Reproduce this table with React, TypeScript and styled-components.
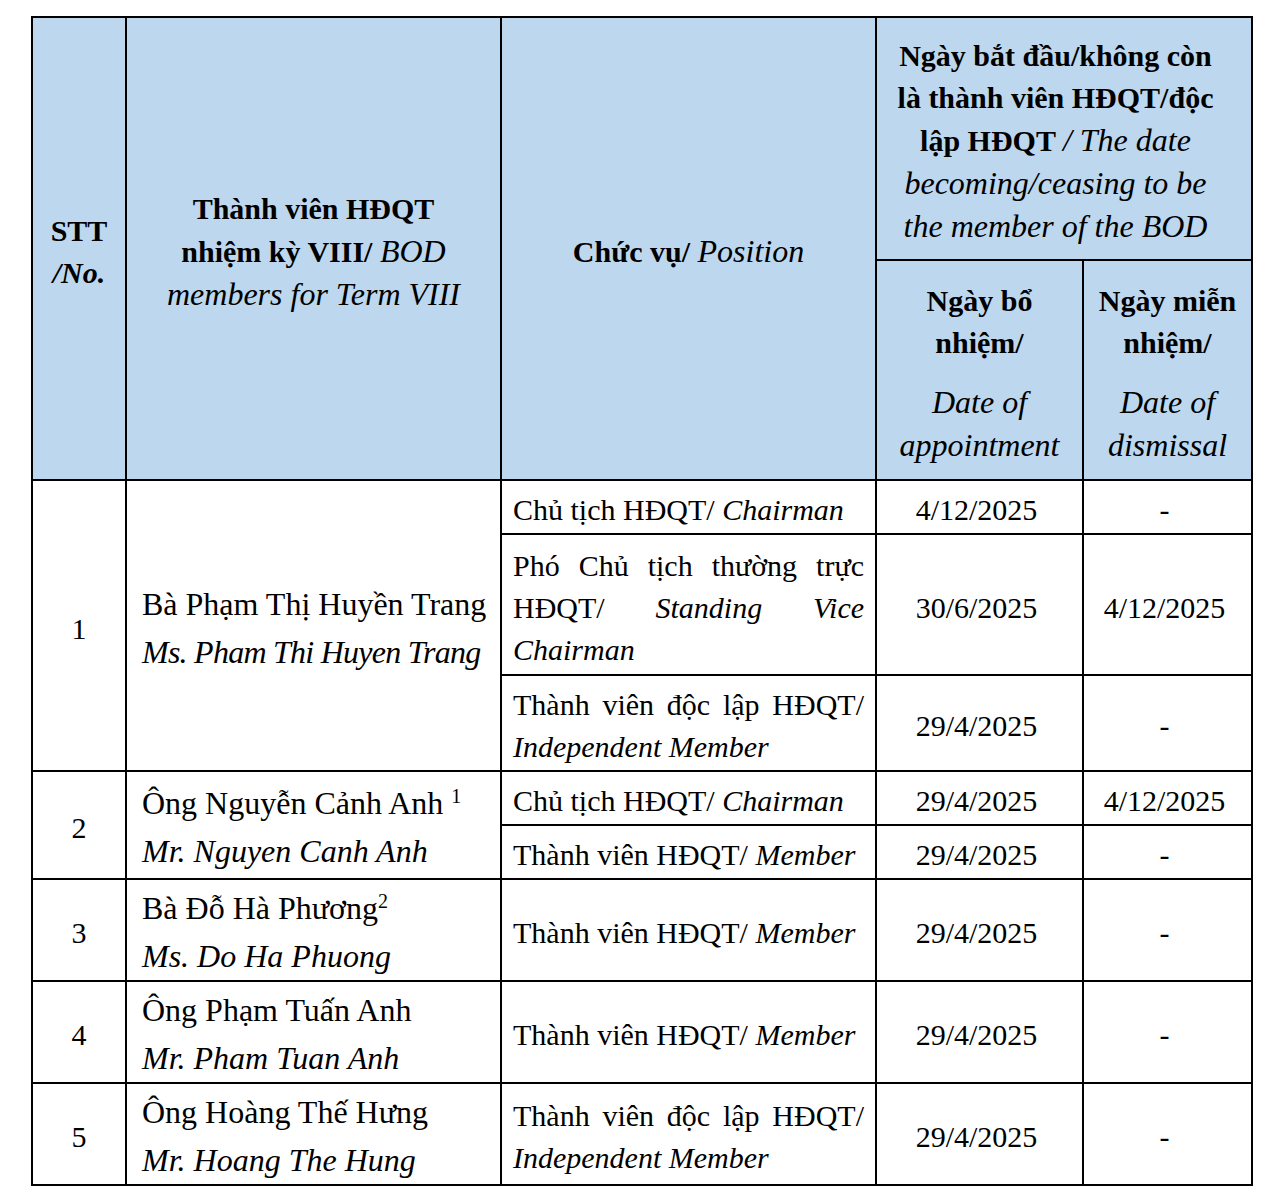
import React from "react";
import styled, { createGlobalStyle } from "styled-components";

const GlobalStyle = createGlobalStyle`
  html, body { margin: 0; padding: 0; background: #ffffff; }
  body {
    font-family: "Liberation Serif", "Times New Roman", "DejaVu Serif", serif;
    color: #000000;
  }
`;

const Page = styled.div`
  padding: 16px 0 0 31px;
`;

const Table = styled.table`
  border-collapse: separate;
  border-spacing: 0;
  table-layout: fixed;
  width: 1222px;
  border-top: 2px solid #000;
  border-left: 2px solid #000;
  font-size: 30px;
  line-height: 42px;
`;

const Col = styled.col<{ $w: number }>`
  width: ${(p) => p.$w}px;
`;

const Row = styled.tr<{ $h: number }>`
  height: ${(p) => p.$h}px;
`;

const HeadCell = styled.th<{ $pl?: number; $pr?: number }>`
  box-sizing: border-box;
  background: #bdd7ee;
  border-right: 2px solid #000;
  border-bottom: 2px solid #000;
  padding: 6px ${(p) => p.$pr ?? 8}px 0 ${(p) => p.$pl ?? 8}px;
  text-align: center;
  vertical-align: middle;
  font-weight: bold;
`;

const Para = styled.div<{ $gap?: number }>`
  margin-top: ${(p) => p.$gap ?? 0}px;
`;

const HeadIt = styled.em`
  font-style: italic;
  font-weight: normal;
  font-size: 32px;
`;

const It = styled.em`
  font-style: italic;
  font-weight: normal;
`;

const BoldIt = styled.em`
  font-style: italic;
  font-weight: bold;
`;

const Cell = styled.td<{ $align?: "center" | "left" | "justify"; $pl?: number; $pr?: number }>`
  box-sizing: border-box;
  border-right: 2px solid #000;
  border-bottom: 2px solid #000;
  padding: 6px ${(p) => p.$pr ?? 11}px 0 ${(p) => p.$pl ?? 11}px;
  vertical-align: middle;
  text-align: ${(p) => p.$align ?? "center"};
`;

const NameCell = styled.td`
  box-sizing: border-box;
  border-right: 2px solid #000;
  border-bottom: 2px solid #000;
  padding: 4px 4px 0 15px;
  vertical-align: middle;
  text-align: left;
  font-size: 32px;
  line-height: 48px;
`;

const NameLine = styled.div<{ $italic?: boolean; $condensed?: boolean }>`
  white-space: nowrap;
  font-style: ${(p) => (p.$italic ? "italic" : "normal")};
  letter-spacing: ${(p) => (p.$condensed ? "-0.75px" : "normal")};
`;

const Note = styled.sup`
  font-size: 20px;
  line-height: 0;
  vertical-align: 11px;
`;

type Member = {
  no: number;
  vi: React.ReactNode;
  en: string;
  condensed?: boolean;
  roles: { vi: string; en: string; from: string; to: string; h: number }[];
};

const members: Member[] = [
  {
    no: 1,
    vi: "Bà Phạm Thị Huyền Trang",
    en: "Ms. Pham Thi Huyen Trang",
    condensed: true,
    roles: [
      { vi: "Chủ tịch HĐQT/", en: "Chairman", from: "4/12/2025", to: "-", h: 54 },
      {
        vi: "Phó Chủ tịch thường trực HĐQT/",
        en: "Standing Vice Chairman",
        from: "30/6/2025",
        to: "4/12/2025",
        h: 141,
      },
      {
        vi: "Thành viên độc lập HĐQT/",
        en: "Independent Member",
        from: "29/4/2025",
        to: "-",
        h: 96,
      },
    ],
  },
  {
    no: 2,
    vi: (
      <>
        Ông Nguyễn Cảnh Anh <Note>1</Note>
      </>
    ),
    en: "Mr. Nguyen Canh Anh",
    roles: [
      { vi: "Chủ tịch HĐQT/", en: "Chairman", from: "29/4/2025", to: "4/12/2025", h: 54 },
      { vi: "Thành viên HĐQT/", en: "Member", from: "29/4/2025", to: "-", h: 54 },
    ],
  },
  {
    no: 3,
    vi: (
      <>
        Bà Đỗ Hà Phương<Note>2</Note>
      </>
    ),
    en: "Ms. Do Ha Phuong",
    roles: [{ vi: "Thành viên HĐQT/", en: "Member", from: "29/4/2025", to: "-", h: 102 }],
  },
  {
    no: 4,
    vi: "Ông Phạm Tuấn Anh",
    en: "Mr. Pham Tuan Anh",
    roles: [{ vi: "Thành viên HĐQT/", en: "Member", from: "29/4/2025", to: "-", h: 102 }],
  },
  {
    no: 5,
    vi: "Ông Hoàng Thế Hưng",
    en: "Mr. Hoang The Hung",
    roles: [
      {
        vi: "Thành viên độc lập HĐQT/",
        en: "Independent Member",
        from: "29/4/2025",
        to: "-",
        h: 102,
      },
    ],
  },
];

export default function App() {
  return (
    <Page>
      <GlobalStyle />
      <Table>
        <colgroup>
          <Col $w={94} />
          <Col $w={375} />
          <Col $w={375} />
          <Col $w={207} />
          <Col $w={169} />
        </colgroup>
        <thead>
          <Row $h={243}>
            <HeadCell rowSpan={2}>
              STT
              <br />
              <BoldIt>/No.</BoldIt>
            </HeadCell>
            <HeadCell rowSpan={2}>
              Thành viên HĐQT
              <br />
              nhiệm kỳ VIII/ <HeadIt>BOD</HeadIt>
              <br />
              <HeadIt>members for Term VIII</HeadIt>
            </HeadCell>
            <HeadCell rowSpan={2}>
              Chức vụ/ <HeadIt>Position</HeadIt>
            </HeadCell>
            <HeadCell colSpan={2} $pl={4} $pr={21}>
              Ngày bắt đầu/không còn
              <br />
              là thành viên HĐQT/độc
              <br />
              lập HĐQT <HeadIt>/ The date</HeadIt>
              <br />
              <HeadIt>becoming/ceasing to be</HeadIt>
              <br />
              <HeadIt>the member of the BOD</HeadIt>
            </HeadCell>
          </Row>
          <Row $h={220}>
            <HeadCell>
              <Para>
                Ngày bổ
                <br />
                nhiệm/
              </Para>
              <Para $gap={17}>
                <HeadIt>
                  Date of
                  <br />
                  appointment
                </HeadIt>
              </Para>
            </HeadCell>
            <HeadCell>
              <Para>
                Ngày miễn
                <br />
                nhiệm/
              </Para>
              <Para $gap={17}>
                <HeadIt>
                  Date of
                  <br />
                  dismissal
                </HeadIt>
              </Para>
            </HeadCell>
          </Row>
        </thead>
        <tbody>
          {members.map((m) =>
            m.roles.map((r, i) => (
              <Row $h={r.h} key={`${m.no}-${i}`}>
                {i === 0 && (
                  <>
                    <Cell rowSpan={m.roles.length}>{m.no}</Cell>
                    <NameCell rowSpan={m.roles.length}>
                      <NameLine>{m.vi}</NameLine>
                      <NameLine $italic $condensed={m.condensed}>
                        {m.en}
                      </NameLine>
                    </NameCell>
                  </>
                )}
                <Cell $align="justify">
                  {r.vi} <It>{r.en}</It>
                </Cell>
                <Cell $pl={8} $pr={14}>
                  {r.from}
                </Cell>
                <Cell $pl={8} $pr={14}>
                  {r.to}
                </Cell>
              </Row>
            ))
          )}
        </tbody>
      </Table>
    </Page>
  );
}
